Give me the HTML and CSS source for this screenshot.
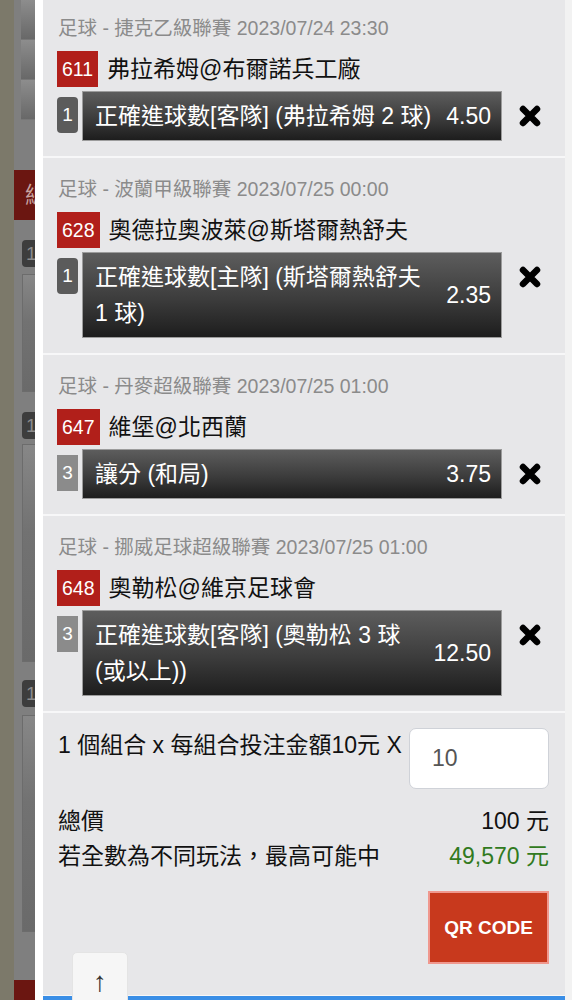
FILE: index.html
```html
<!DOCTYPE html>
<html>
<head>
    <meta charset="utf-8">
    <title>投注單</title>
    <link rel="stylesheet" href="styles.css">
</head>
<body>
    <div class="page">
        <div class="backdrop">
            <div class="ghost">
                <div class="ghost-top">
                    <div class="ghost-cell"></div>
                    <div class="ghost-cell"></div>
                    <div class="ghost-cell"></div>
                </div>
                <div class="ghost-red">總</div>
                <div class="ghost-key">1</div>
                <div class="ghost-box box-a"></div>
                <div class="ghost-key key-b">1</div>
                <div class="ghost-box box-b"></div>
                <div class="ghost-key key-c">1</div>
                <div class="ghost-box box-c"></div>
                <div class="ghost-red red-end"></div>
            </div>
        </div>

        <div class="panel">
            <div class="bet first">
                <div class="league">足球 - 捷克乙級聯賽 2023/07/24 23:30</div>
                <div class="match"><span class="code">611</span><span class="teams">弗拉希姆@布爾諾兵工廠</span></div>
                <div class="pick">
                    <span class="num">1</span>
                    <div class="sel">
                        <span class="sel-text">正確進球數[客隊] (弗拉希姆 2 球)</span>
                        <span class="odds">4.50</span>
                    </div>
                    <span class="remove"><svg width="22" height="22" viewBox="0 0 22 22"><path d="M4 4L18 18M18 4L4 18" stroke="#000" stroke-width="6.5" stroke-linecap="round"/></svg></span>
                </div>
            </div>

            <div class="bet">
                <div class="league">足球 - 波蘭甲級聯賽 2023/07/25 00:00</div>
                <div class="match"><span class="code">628</span><span class="teams">奧德拉奧波萊@斯塔爾熱舒夫</span></div>
                <div class="pick">
                    <span class="num">1</span>
                    <div class="sel">
                        <span class="sel-text">正確進球數[主隊] (斯塔爾熱舒夫 1&nbsp;球)</span>
                        <span class="odds">2.35</span>
                    </div>
                    <span class="remove"><svg width="22" height="22" viewBox="0 0 22 22"><path d="M4 4L18 18M18 4L4 18" stroke="#000" stroke-width="6.5" stroke-linecap="round"/></svg></span>
                </div>
            </div>

            <div class="bet">
                <div class="league">足球 - 丹麥超級聯賽 2023/07/25 01:00</div>
                <div class="match"><span class="code">647</span><span class="teams">維堡@北西蘭</span></div>
                <div class="pick">
                    <span class="num light">3</span>
                    <div class="sel">
                        <span class="sel-text">讓分 (和局)</span>
                        <span class="odds">3.75</span>
                    </div>
                    <span class="remove"><svg width="22" height="22" viewBox="0 0 22 22"><path d="M4 4L18 18M18 4L4 18" stroke="#000" stroke-width="6.5" stroke-linecap="round"/></svg></span>
                </div>
            </div>

            <div class="bet">
                <div class="league">足球 - 挪威足球超級聯賽 2023/07/25 01:00</div>
                <div class="match"><span class="code">648</span><span class="teams">奧勒松@維京足球會</span></div>
                <div class="pick">
                    <span class="num light">3</span>
                    <div class="sel">
                        <span class="sel-text">正確進球數[客隊] (奧勒松 3 球 (或以上))</span>
                        <span class="odds">12.50</span>
                    </div>
                    <span class="remove"><svg width="22" height="22" viewBox="0 0 22 22"><path d="M4 4L18 18M18 4L4 18" stroke="#000" stroke-width="6.5" stroke-linecap="round"/></svg></span>
                </div>
            </div>

            <div class="summary">
                <div class="stake-row">
                    <span>1 個組合 x 每組合投注金額10元 X</span>
                    <input class="stake" type="text" value="10">
                </div>
                <div class="total-row">
                    <span>總價</span>
                    <span>100 元</span>
                </div>
                <div class="total-row">
                    <span>若全數為不同玩法，最高可能中</span>
                    <span class="win">49,570 元</span>
                </div>
                <button class="qr-button">QR CODE</button>
            </div>
            <div class="footer-bar"></div>
        </div>
    </div>
    <div class="to-top">↑</div>
</body>
</html>
```

FILE: styles.css
```css
body {
    margin: 0;
    background-color: #f2f2f2;
    font-family: 'Liberation Sans', 'Noto Sans CJK TC', sans-serif;
    color: #111;
    overflow: hidden;
}
.page {
    display: flex;
    height: 1000px;
    overflow: hidden;
}

/* dimmed page behind the slip */
.backdrop {
    flex: none;
    width: 35px;
    background-color: #7c796a;
}
.ghost {
    margin-left: 14px;
    height: 100%;
    background-color: #7f7f7f;
    display: flex;
    flex-direction: column;
    overflow: hidden;
}
.ghost-top {
    margin-left: 7px;
    height: 133px;
    display: flex;
    flex-direction: column;
}
.ghost-cell {
    flex: 1;
    background: linear-gradient(#8d8d8d, #686868);
    border-bottom: 1px solid #777;
}
.ghost-red {
    margin-top: 50px;
    height: 50px;
    flex: none;
    background-color: #6b1611;
    color: #c8a3a0;
    font-size: 23px;
    line-height: 50px;
    padding-left: 11px;
    white-space: nowrap;
}
.ghost-key {
    margin: 20px 0 0 8px;
    height: 27px;
    flex: none;
    background-color: #3d3d3d;
    border-radius: 4px 0 0 4px;
    color: #8a8a8a;
    font-size: 19px;
    line-height: 27px;
    padding-left: 4px;
}
.ghost-box {
    margin: 7px 0 0 8px;
    flex: none;
    border: 1px solid #6c6c6c;
    border-right: none;
    background: linear-gradient(#878787, #727272 40%, #6a6a6a);
}
.box-a { height: 116px; }
.box-b { height: 216px; margin-top: 5px; }
.box-c { height: 215px; margin-top: 8px; }
.key-b { margin-top: 20px; }
.key-c { margin-top: 18px; }
.red-end { margin-top: 48px; height: 20px; }

/* bet slip */
.panel {
    flex: none;
    width: 522px;
    border-left: 8px solid #fff;
    background-color: #e7e7e9;
}
.bet {
    padding: 19px 7px 15px 14px;
    border-bottom: 2px solid #f7f7f8;
}
.bet.first {
    margin-top: -3px;
}
.league {
    font-size: 19.5px;
    line-height: 24px;
    color: #8b8b8b;
    padding-left: 1px;
}
.match {
    display: flex;
    margin-top: 11px;
    height: 36px;
    line-height: 36px;
}
.code {
    background-color: #b11f1a;
    color: #fff;
    font-size: 19.5px;
    padding: 0 5px;
}
.teams {
    font-size: 23px;
    margin-left: 9px;
}
.pick {
    display: flex;
    align-items: flex-start;
    margin-top: 4px;
}
.num {
    flex: none;
    width: 21px;
    height: 36px;
    margin-top: 6px;
    margin-right: 4px;
    background-color: #5b5b5b;
    border-radius: 4px;
    color: #fff;
    font-size: 19px;
    line-height: 36px;
    text-align: center;
}
.num.light {
    background-color: #8b8b8b;
    border-radius: 0;
}
.sel {
    flex: none;
    width: 396px;
    display: flex;
    align-items: center;
    justify-content: space-between;
    padding: 6px 10px 6px 12px;
    border: 1px solid #9c9c9c;
    background: linear-gradient(#5d5d5d, #3c3c3c 55%, #1d1d1d);
    color: #fff;
    font-size: 23px;
    line-height: 36px;
}
.odds {
    flex: none;
    margin-left: 10px;
}
.remove {
    flex: 1;
    height: 50px;
    display: flex;
    align-items: center;
    justify-content: center;
}

.summary {
    padding: 15px 16px 31px 15px;
    font-size: 23px;
}
.stake-row {
    display: flex;
    justify-content: space-between;
    align-items: flex-start;
    line-height: 34px;
}
.stake {
    width: 140px;
    height: 61px;
    box-sizing: border-box;
    border: 1px solid #cfd2d8;
    border-radius: 7px;
    background-color: #fff;
    padding: 0 0 0 22px;
    font-family: inherit;
    font-size: 23px;
    color: #555;
}
.total-row {
    display: flex;
    justify-content: space-between;
    line-height: 35px;
}
.stake-row + .total-row {
    margin-top: 15px;
}
.win {
    color: #317a20;
}
.qr-button {
    display: block;
    margin: 17px 0 0 auto;
    width: 121px;
    height: 73px;
    border: 2px solid #f0988e;
    background-color: #c8391d;
    color: #fff;
    font-family: 'Liberation Sans', sans-serif;
    font-weight: bold;
    font-size: 19px;
    cursor: pointer;
}
.footer-bar {
    border-top: 1px solid #f8f8f8;
    height: 40px;
    background-color: #3a8ee6;
}
.to-top {
    position: absolute;
    left: 72px;
    top: 952px;
    width: 56px;
    height: 60px;
    box-sizing: border-box;
    background-color: #f6f6f6;
    border: 1px solid #e4e4e4;
    border-radius: 5px 5px 0 0;
    text-align: center;
    font-family: 'Liberation Sans', sans-serif;
    font-size: 28px;
    line-height: 58px;
    color: #333;
}
```
